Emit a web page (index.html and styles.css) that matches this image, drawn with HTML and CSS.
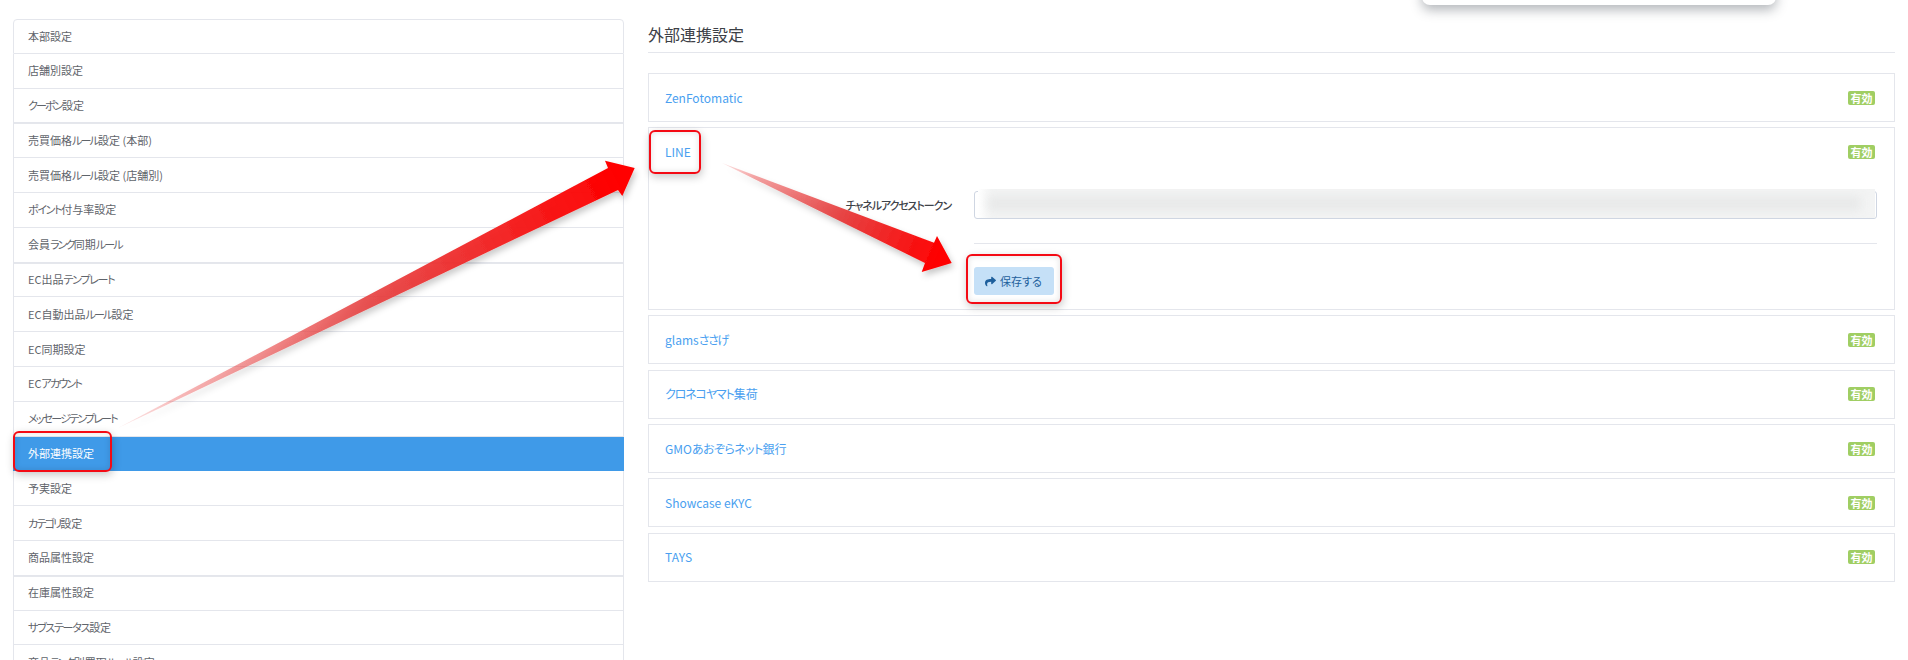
FILE: index.html
```html
<!DOCTYPE html>
<html lang="ja">
<head>
<meta charset="utf-8">
<title>外部連携設定</title>
<link rel="stylesheet" href="styles.css">
</head>
<body>
<div class="page">
  <nav class="side">
    <div class="group">
      <a class="item">本部設定</a>
      <a class="item">店舗別設定</a>
      <a class="item"><span class="k">クーポン</span>設定</a>
    </div>
    <div class="group">
      <a class="item">売買価格<span class="k">ルール</span>設定 (本部)</a>
      <a class="item">売買価格<span class="k">ルール</span>設定 (店舗別)</a>
      <a class="item"><span class="k-mid">ポイント</span>付与率設定</a>
      <a class="item">会員<span class="k">ランク</span>同期<span class="k">ルール</span></a>
    </div>
    <div class="group">
      <a class="item">EC出品<span class="k-mid">テンプレート</span></a>
      <a class="item">EC自動出品<span class="k">ルール</span>設定</a>
      <a class="item">EC同期設定</a>
      <a class="item">EC<span class="k">アカウント</span></a>
      <a class="item"><span class="k">メッセージテンプレート</span></a>
      <a class="item active">外部連携設定</a>
      <a class="item">予実設定</a>
      <a class="item"><span class="k">カテゴリ</span>設定</a>
      <a class="item">商品属性設定</a>
    </div>
    <div class="group">
      <a class="item">在庫属性設定</a>
      <a class="item"><span class="k-mid">サブステータス</span>設定</a>
      <a class="item">商品<span class="k">ランク</span>別買取<span class="k">ルール</span>設定</a>
    </div>
  </nav>
  <main class="main">
    <h1 class="title">外部連携設定</h1>
    <section class="card"><div class="head"><a class="link">ZenFotomatic</a><span class="badge">有効</span></div></section>
    <section class="card">
      <div class="head"><a class="link">LINE</a><span class="badge">有効</span></div>
      <div class="form-row">
        <label class="label"><span class="k-soft">チャネルアクセストークン</span></label>
        <div class="input"><div class="mask"><div class="smear"></div></div></div>
      </div>
      <div class="actions">
        <button class="btn" type="button">
          <svg class="btn-icon" viewBox="0 0 512 512"><path d="M503.7 189.8L327.7 37.9C312.3 24.5 288 35.3 288 56v80.1C127.4 137.9 0 170.1 0 322.3c0 61.4 39.6 122.3 83.3 154.1 13.7 9.9 33.1-2.5 28.1-18.6C66.1 312.8 132.9 274.3 288 272.1V360c0 20.7 24.3 31.5 39.7 18.2l176-152c11.1-9.6 11.1-26.8 0-36.4z"/></svg>保存する
        </button>
      </div>
    </section>
    <section class="card"><div class="head"><a class="link">glams<span class="k-mid">ささげ</span></a><span class="badge">有効</span></div></section>
    <section class="card"><div class="head"><a class="link"><span class="k-soft">クロネコヤマト</span>集荷</a><span class="badge">有効</span></div></section>
    <section class="card"><div class="head"><a class="link">GMO<span class="k-min">あおぞらネット</span>銀行</a><span class="badge">有効</span></div></section>
    <section class="card"><div class="head"><a class="link">Showcase eKYC</a><span class="badge">有効</span></div></section>
    <section class="card"><div class="head"><a class="link">TAYS</a><span class="badge">有効</span></div></section>
  </main>
</div>

<div class="popup"></div>
<div class="mark mark-side"></div>
<div class="mark mark-line"></div>
<div class="mark mark-btn"></div>

<svg class="arrows" viewBox="0 0 1908 660" width="1908" height="660">
  <defs>
    <linearGradient id="a1" gradientUnits="userSpaceOnUse" x1="118" y1="428" x2="620" y2="178">
      <stop offset="0" stop-color="#ee5555" stop-opacity=".12"/>
      <stop offset="0.12" stop-color="#ea4a4a" stop-opacity=".38"/>
      <stop offset="0.5" stop-color="#e63c3c" stop-opacity=".88"/>
      <stop offset="1" stop-color="#ff0000"/>
    </linearGradient>
    <linearGradient id="a2" gradientUnits="userSpaceOnUse" x1="722" y1="163" x2="940" y2="258">
      <stop offset="0" stop-color="#ee5555" stop-opacity=".15"/>
      <stop offset="0.15" stop-color="#ea4a4a" stop-opacity=".5"/>
      <stop offset="0.55" stop-color="#e63c3c" stop-opacity=".95"/>
      <stop offset="1" stop-color="#ff0000"/>
    </linearGradient>
    <filter id="sh" x="-10%" y="-10%" width="120%" height="125%">
      <feDropShadow dx="2" dy="4" stdDeviation="3" flood-color="#000" flood-opacity=".22"/>
    </filter>
  </defs>
  <polygon class="arrow-one" points="118,428 608,168 605,160.7 634.7,168 622.3,196 618,190" fill="url(#a1)" filter="url(#sh)"/>
  <polygon class="arrow-two" points="722,163 934,242.7 937,236 951.7,263 921.7,272 925,263" fill="url(#a2)" filter="url(#sh)"/>
</svg>
</body>
</html>
```
FILE: styles.css
```css
* { box-sizing: border-box; }
html, body { margin: 0; height: 100%; overflow: hidden; background: #fff; }
body {
  font-family: "Noto Sans CJK JP", "Noto Sans", sans-serif;
  font-feature-settings: "palt";
  font-size: 11px;
  color: #4f5467;
  position: relative;
}
.page { display: flex; align-items: flex-start; padding: 19px 13px 0 13px; gap: 24px; }

.k { letter-spacing: -1.8px; }
.k-mid { letter-spacing: -1.3px; }
.k-soft { letter-spacing: -1.1px; }
.k-min { letter-spacing: -.6px; }

.side { width: 611px; flex: none; }
.group { border-bottom: 1px solid #e5e7ec; margin-bottom: -1px; }
.group:first-child .item:first-child { border-top: 1px solid #e4e6ec; border-radius: 4px 4px 0 0; }
.item {
  display: flex;
  align-items: center;
  height: 34.8px;
  padding: 0 14px;
  border: 1px solid #e4e6ec;
  border-top: 0;
  color: #5f646b;
  font-size: 11px;
  line-height: 1;
  white-space: pre;
}
.item.active { background: #3f9ae8; border-color: #3f9ae8; color: #fff; }

.main { flex: 1; min-width: 0; }
.title {
  margin: 0 0 20px;
  height: 34px;
  padding-top: 5px;
  font-size: 16px;
  line-height: 20px;
  font-weight: 400;
  color: #3c4046;
  border-bottom: 1px solid #e4e6ec;
}
.card { border: 1px solid #e4e6ec; margin-bottom: 5.4px; background: #fff; }
.head { display: flex; justify-content: space-between; align-items: center; height: 47px; padding: 0 19px 0 16px; }
.link { color: #4a9ff0; font-size: 12px; line-height: 1; }
.badge {
  width: 27px;
  height: 14px;
  border-radius: 2px;
  background: #a0ce63;
  color: #fff;
  font-size: 11px;
  font-weight: 700;
  line-height: 14px;
  text-align: center;
  font-feature-settings: normal;
}
.form-row { display: flex; align-items: center; padding: 16px 17px 0 0; }
.label {
  width: 302px;
  flex: none;
  text-align: right;
  font-size: 11px;
  font-weight: 500;
  color: #3f4349;
}
.input {
  flex: 1;
  margin-left: 22.5px;
  height: 28px;
  border: 1px solid #cfd6e2;
  border-radius: 3px;
  position: relative;
  background: #fff;
}
.mask {
  position: absolute;
  left: 3px;
  right: 1px;
  top: -3px;
  bottom: 0;
  overflow: hidden;
  background: linear-gradient(90deg, #fff 0, #f3f4f4 14px, #f3f4f4 100%);
}
.smear {
  position: absolute;
  left: 10px;
  right: 14px;
  top: 7px;
  bottom: 7px;
  background: #e8e9e9;
  filter: blur(5px);
}
.actions {
  margin: 24px 17px 0 324.5px;
  padding: 23px 0 13.5px;
  border-top: 1px solid #e4e6ec;
}
.btn {
  display: flex;
  align-items: center;
  justify-content: center;
  gap: 4px;
  width: 80px;
  height: 28px;
  padding: 0;
  border: 0;
  border-radius: 3px;
  background: #c5e0f7;
  color: #1e5f9c;
  font: inherit;
  font-size: 11px;
}
.btn-icon { width: 11px; height: 11px; fill: #1e5f9c; }

.popup {
  position: absolute;
  left: 1422px;
  top: -20px;
  width: 354px;
  height: 25px;
  background: #fff;
  border-radius: 8px;
  box-shadow: 0 5px 12px rgba(40, 50, 60, .35);
}
.mark {
  position: absolute;
  border: 2px solid #f40a14;
  border-radius: 6px;
  box-shadow: 1px 3px 8px rgba(0, 0, 0, .22), inset 0 0 6px rgba(0, 0, 0, .12);
}
.mark-side { left: 13px; top: 431px; width: 99px; height: 41px; }
.mark-line { left: 649px; top: 130px; width: 52px; height: 44px; }
.mark-btn { left: 966px; top: 254px; width: 96px; height: 50px; }
.arrows { position: absolute; left: 0; top: 0; pointer-events: none; }
```
